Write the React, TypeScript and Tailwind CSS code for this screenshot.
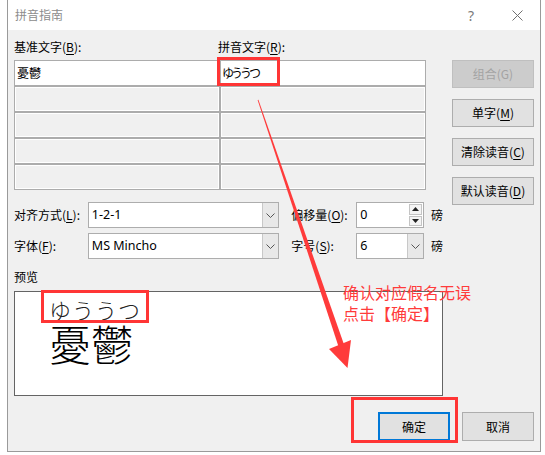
import React from "react";

const cjk = "font-['Noto_Sans_CJK_SC','Noto_Sans_CJK_JP',sans-serif]";
const jp = "font-['Noto_Sans_CJK_JP','Noto_Sans_CJK_SC',sans-serif]";

function Key({ k }: { k: string }) {
  return <span className="underline underline-offset-2">{k}</span>;
}

function Chevron() {
  return (
    <svg width="9" height="5" viewBox="0 0 9 5">
      <path d="M0.5 0.5 L4.5 4.5 L8.5 0.5" stroke="#555" strokeWidth="1" fill="none" />
    </svg>
  );
}

function SideButton({ children, disabled }: { children: React.ReactNode; disabled?: boolean }) {
  return (
    <div
      className={
        disabled
          ? "flex h-[28px] w-[82px] items-center justify-center border border-[#bfbfbf] bg-[#cccccc] text-[12px] text-[#a3a3a3]"
          : "flex h-[28px] w-[82px] items-center justify-center border border-[#adadad] bg-[#e1e1e1] text-[12px] text-black"
      }
    >
      {children}
    </div>
  );
}

function Combo({ value, wide }: { value: string; wide?: boolean }) {
  return (
    <div className={wide ? "flex h-[26px] w-[192px] border border-[#adadad] bg-white" : "flex h-[26px] w-[68px] border border-[#adadad] bg-white"}>
      <div className="flex flex-1 items-center pl-[3px] font-['Noto_Sans',sans-serif] text-[12.5px] text-black">{value}</div>
      <div className="flex w-[16px] items-center justify-center border-l border-[#c8c8c8] bg-[#e8e8e8]">
        <Chevron />
      </div>
    </div>
  );
}

function Spinner({ value }: { value: string }) {
  return (
    <div className="flex h-[26px] w-[68px] border border-[#adadad] bg-white">
      <div className="flex flex-1 items-center pl-[3px] font-['Noto_Sans',sans-serif] text-[12.5px] text-black">{value}</div>
      <div className="flex w-[15px] flex-col gap-[1px] p-[1px]">
        <div className="flex flex-1 items-center justify-center border border-[#c4c4c4] bg-[#f4f4f4]">
          <svg width="7" height="4" viewBox="0 0 7 4">
            <path d="M0 4 L3.5 0 L7 4 Z" fill="#222" />
          </svg>
        </div>
        <div className="flex flex-1 items-center justify-center border border-[#c4c4c4] bg-[#f4f4f4]">
          <svg width="7" height="4" viewBox="0 0 7 4">
            <path d="M0 0 L3.5 4 L7 0 Z" fill="#222" />
          </svg>
        </div>
      </div>
    </div>
  );
}

export default function App() {
  const rows = [0, 1, 2, 3];
  return (
    <div className={`relative h-[455px] w-[545px] overflow-hidden bg-white ${cjk}`}>
      <div className="ml-[7px] flex h-[452px] w-[534px] flex-col border-x border-b border-[#9a9a9a]">
        {/* title bar */}
        <div className="flex h-[30px] items-center bg-white">
          <div className="pl-[7px] text-[12px] text-[#8c8c8c]">拼音指南</div>
          <div className="ml-auto flex h-full">
            <div className="flex w-[46px] items-center justify-center font-['Noto_Sans',sans-serif] text-[14px] text-[#7a7a7a]">?</div>
            <div className="flex w-[46px] items-center justify-center">
              <svg width="11" height="11" viewBox="0 0 11 11">
                <path d="M0.5 0.5 L10.5 10.5 M10.5 0.5 L0.5 10.5" stroke="#707070" strokeWidth="1" />
              </svg>
            </div>
          </div>
        </div>

        {/* body */}
        <div className="flex flex-1 flex-col bg-[#f0f0f0] px-[6px] pt-[8px]">
          <div className="flex">
            <div className="flex w-[429px] flex-col">
              <div className="mb-[4px] flex h-[18px] items-center text-[12px] text-black">
                <div className="w-[204px]">
                  基准文字(<Key k="B" />):
                </div>
                <div>
                  拼音文字(<Key k="R" />):
                </div>
              </div>

              <div className="grid w-[412px] grid-cols-[204px_204px] gap-[2px] border border-[#acacac] bg-[#acacac]">
                <div className={`flex h-[24px] items-center bg-white pl-[2px] text-[12px] text-black ${jp}`}>憂鬱</div>
                <div className={`flex h-[24px] items-center bg-white pl-[1px] text-[12px] tracking-[-3px] text-black ${jp}`}>ゆううつ</div>
                {rows.map((r) => (
                  <React.Fragment key={r}>
                    <div className="h-[24px] border border-white bg-[#f0f0f0]" />
                    <div className="h-[24px] border border-white bg-[#f0f0f0]" />
                  </React.Fragment>
                ))}
              </div>

              <div className="mt-[12px] flex items-center text-[12px] text-black">
                <div className="w-[74px]">
                  对齐方式(<Key k="L" />):
                </div>
                <Combo value="1-2-1" wide />
                <div className="ml-[12px] w-[65px]">
                  偏移量(<Key k="O" />):
                </div>
                <Spinner value="0" />
                <div className="ml-[7px]">磅</div>
              </div>

              <div className="mt-[5px] flex items-center text-[12px] text-black">
                <div className="w-[74px]">
                  字体(<Key k="F" />):
                </div>
                <Combo value="MS Mincho" wide />
                <div className="ml-[12px] w-[65px]">
                  字号(<Key k="S" />):
                </div>
                <Combo value="6" />
                <div className="ml-[7px]">磅</div>
              </div>

              <div className="mt-[9px] flex h-[18px] items-center text-[12px] text-black">预览</div>

              <div className={`mt-[5px] flex h-[105px] w-[429px] flex-col items-start border border-[#646464] bg-white pl-[34px] ${jp}`}>
                <div className="mt-[6px] text-[22px] font-light leading-[22px] tracking-[1px] text-[#222]">ゆううつ</div>
                <div className="mt-[2px] text-[42px] font-light leading-[42px] text-black">憂鬱</div>
              </div>
            </div>

            <div className="ml-[9px] mt-[22px] flex flex-col gap-[11px]">
              <SideButton disabled>组合(G)</SideButton>
              <SideButton>
                单字(<Key k="M" />)
              </SideButton>
              <SideButton>
                清除读音(<Key k="C" />)
              </SideButton>
              <SideButton>
                默认读音(<Key k="D" />)
              </SideButton>
            </div>
          </div>

          <div className="mt-[16px] flex justify-end gap-[12px]">
            <div className="flex h-[29px] w-[72px] items-center justify-center border-2 border-[#0078d7] bg-[#e1e1e1] text-[12px] text-black">确定</div>
            <div className="flex h-[29px] w-[72px] items-center justify-center border border-[#adadad] bg-[#e1e1e1] text-[12px] text-black">取消</div>
          </div>
        </div>
      </div>

      {/* annotations drawn over the dialog */}
      <div className="absolute left-[217px] top-[57px] h-[29px] w-[63px] border-[3px] border-[#ff3535]" />
      <div className="absolute left-[41px] top-[290px] h-[33px] w-[108px] border-[3px] border-[#ff3535]" />
      <div className="absolute left-[351px] top-[397px] h-[46px] w-[107px] border-[3px] border-[#ff3535]" />
      <div className="absolute left-[343px] top-[282px] text-[16px] leading-[21px] text-[#ff3b3b]">
        <div>确认对应假名无误</div>
        <div>点击【确定】</div>
      </div>
      <svg className="pointer-events-none absolute left-0 top-0" width="545" height="455" viewBox="0 0 545 455">
        <polygon points="257.6,100 258.4,99.8 344,344.5 338.4,346.3" fill="#ff3b3b" />
        <polygon points="329,349 351,340 347.5,368" fill="#ff3b3b" />
      </svg>
    </div>
  );
}
